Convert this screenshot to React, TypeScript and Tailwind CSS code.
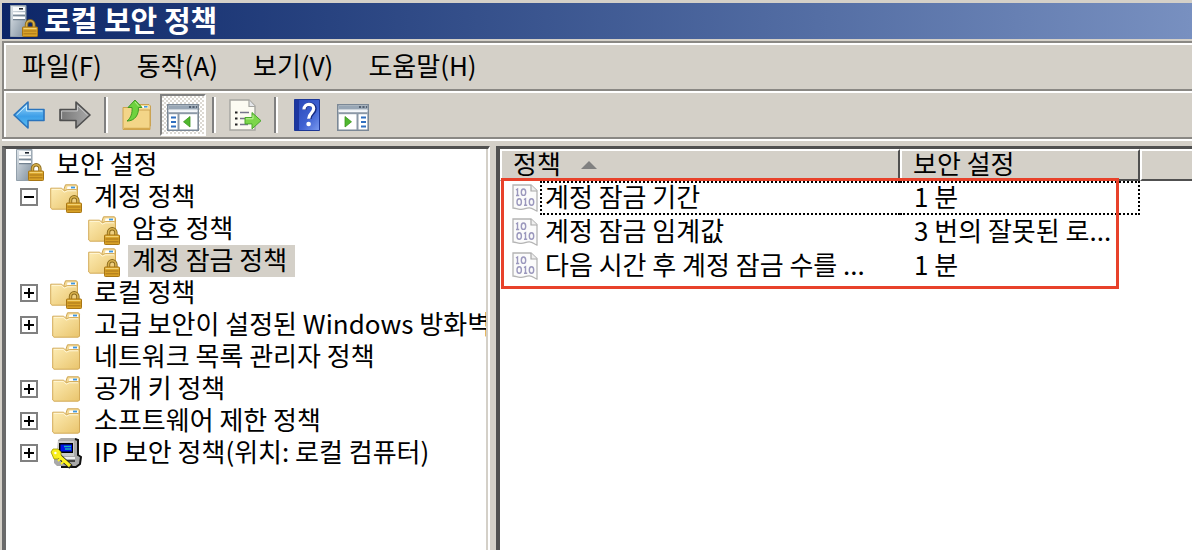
import type { ReactNode } from "react";

function Lock() {
  return (
    <g>
      <path d="M20.5 23v-3.5a3.7 3.7 0 0 1 7.4 0V23" fill="none" stroke="#8a6a1c" strokeWidth="3.4" />
      <path d="M20.5 23v-3.5a3.7 3.7 0 0 1 7.4 0V23" fill="none" stroke="#d8b04c" strokeWidth="1.6" />
      <rect x="16.5" y="22" width="15" height="9.5" rx="0.8" fill="#d9a227" stroke="#a87614" />
      <path d="M17.5 23.5h13" stroke="#f3d272" strokeWidth="1.2" />
      <path d="M17.5 26h13M17.5 28.8h13" stroke="#a9761a" />
    </g>
  );
}

function Folder({ locked = false }: { locked?: boolean }) {
  return (
    <svg viewBox="0 0 32 32" className="size-8 shrink-0" aria-hidden="true">
      <defs>
        <linearGradient id="folder" x1="0" y1="0" x2="1" y2="1">
          <stop offset="0" stopColor="#fdecb4" />
          <stop offset="1" stopColor="#e9c46c" />
        </linearGradient>
      </defs>
      <g transform={locked ? "translate(0 0)" : "translate(2 0)"}>
        <path d="M14 8l1.5-4.2h11l1 1.4V27H14z" fill="#f4dc9a" stroke="#cfa552" />
        <path d="M17.5 5.5h8.5v2.6h-9z" fill="#fff" />
        <path d="M21 5.6h4v1.8h-4z" fill="#3f97e0" />
        <path d="M.7 7.2h11l2.6 2.6 3-1.2h9.2l1 1.2v17.4L26 28.2H2L.7 27z" fill="url(#folder)" stroke="#d3aa58" />
        <path d="M1.8 8.4h9.4l3 2.8 3.4-1.4h8.6" fill="none" stroke="#fff6d6" />
      </g>
      {locked && <Lock />}
    </svg>
  );
}

function Server({ className }: { className: string }) {
  return (
    <svg viewBox="4 0 28 32" className={className} aria-hidden="true">
      <defs>
        <linearGradient id="server" x1="0" y1="0" x2="1" y2="1">
          <stop offset="0" stopColor="#dfe5ea" />
          <stop offset="1" stopColor="#7f8f9e" />
        </linearGradient>
      </defs>
      <path d="M4.5.5H20v31H4.5z" fill="url(#server)" stroke="#93a0ab" />
      <path d="M7 2h12v4H7z" fill="#f7f9fa" />
      <path d="M13 3h4v1.6h-4z" fill="#1c2430" />
      <path d="M7 8.5h12M7 13h12" stroke="#fff" strokeWidth="2.4" />
      <path d="M7 10.2h12M7 14.7h12" stroke="#5f7080" />
      <Lock />
    </svg>
  );
}

function IpKey() {
  return (
    <svg viewBox="-1 0 32 32" className="size-8 shrink-0" aria-hidden="true">
      <path d="M7 3l3-2h15l2 2v16l3 2v5l-3 3H6l-3-3v-6l3-2z" fill="#a9a9a9" />
      <path d="M24 2l3 1v15l3 2-1 7-4 3H10" fill="none" stroke="#111" strokeWidth="2" />
      <path d="M7 4h16v15H6z" fill="#c9c9c9" />
      <path d="M8 6h14v10H8z" fill="#000" />
      <path d="M9.5 7.5H21v7H9.5z" fill="#0012e8" />
      <path d="M13 9.5h7M14 12h6" stroke="#18b4b4" strokeWidth="1.4" />
      <path d="M5 20h19v2H5z" fill="#eee" />
      <path d="M10 24h14" stroke="#444" strokeWidth="2" />
      <path d="M7 18l13 12" stroke="#222" strokeWidth="5" />
      <path d="M0 15l2-3h5l3 3v4l-3 3H3z" fill="#f7ee1c" stroke="#9b9400" strokeWidth="0.8" />
      <path d="M7 18l12 11" stroke="#fdf320" strokeWidth="3.2" />
      <path d="M10 21l-3 3M13 24l-3 3" stroke="#fdf320" strokeWidth="1.8" />
      <circle cx="4.4" cy="16" r="1.2" fill="#fff" />
    </svg>
  );
}

function Arrow({ back = false }: { back?: boolean }) {
  return (
    <svg viewBox="0 0 32 28" className="h-7 w-8" aria-hidden="true">
      <defs>
        <linearGradient id="blue" x1="0" y1="0" x2="0" y2="1">
          <stop offset="0" stopColor="#a5dbfb" />
          <stop offset="0.55" stopColor="#3d9fe8" />
          <stop offset="1" stopColor="#5cc0f5" />
        </linearGradient>
        <linearGradient id="gray" x1="0" y1="0" x2="1" y2="0">
          <stop offset="0" stopColor="#757575" />
          <stop offset="1" stopColor="#a9a9a9" />
        </linearGradient>
      </defs>
      {back ? (
        <g>
          <path d="M1 14L15 1v7.5h16v11H15V27z" fill="url(#blue)" stroke="#2a74bd" strokeWidth="1.6" strokeLinejoin="round" />
          <path d="M3.6 14L13.5 4.6V10h16" fill="none" stroke="#c9ecff" />
        </g>
      ) : (
        <g>
          <path d="M31 14L17 1v7.5H1v11h16V27z" fill="url(#gray)" stroke="#4f4f4f" strokeWidth="1.6" strokeLinejoin="round" />
          <path d="M2.6 18V10h15.9V4.6L28.4 14" fill="none" stroke="#c6c6c6" />
        </g>
      )}
    </svg>
  );
}

function FolderUp() {
  return (
    <svg viewBox="0 2 30 32" className="h-8 w-[30px]" aria-hidden="true">
      <path d="M14 8l2-2.5h11l1.5 1.5v20H14z" fill="#f3dc9c" stroke="#c9a254" transform="translate(0 2)" />
      <path d="M19 9h7v2h-7z" fill="#fff" />
      <path d="M22 9h3.5v1.6H22z" fill="#3f97e0" />
      <path d="M1 10.5h10l3 2.5h14v19.5H1z" fill="#f3d588" stroke="#cda350" />
      <path d="M2 31.5h26" stroke="#d5a94e" strokeWidth="1.5" />
      <path d="M13 3l7 7.500h-3.600c.6 7-3.400 13.500-11.400 13.500 4-3 5.500-8 5-13.500H6z" fill="#6ed23e" stroke="#3f9a22" strokeLinejoin="round" />
      <path d="M13 5l4 4.600" stroke="#b8f090" />
    </svg>
  );
}

function PaneIcon({ right = false }: { right?: boolean }) {
  return (
    <svg viewBox="0 -5 32 32" className="size-8" aria-hidden="true">
      <path d="M.8.8h30.4v25.4H.8z" fill="#fff" stroke="#7b8896" strokeWidth="1.6" />
      <path d="M1.500 1.500h29v4h-29z" fill="#98a6b5" />
      <path d="M22 3h2M25.500 3h2M29 3h1.200" stroke="#3c4a5a" strokeWidth="1.6" />
      <path d="M1.500 6.800h29" stroke="#eef2f6" strokeWidth="1.6" />
      <path d="M1.500 9.200h29" stroke="#8b98a7" strokeWidth="2" />
      {right ? (
        <g>
          <path d="M20.500 10v16" stroke="#8b98a7" strokeWidth="2" />
          <path d="M24 13.500h5M24 18h5M24 22.500h5" stroke="#2f6fc0" strokeWidth="1.8" />
          <path d="M8 12.500v10.500l6.500-5.200z" fill="#4fb82e" stroke="#3c9420" strokeWidth="0.8" />
        </g>
      ) : (
        <g>
          <path d="M11.500 10v16" stroke="#8b98a7" strokeWidth="2" />
          <path d="M4 13.500h5M4 18h5M4 22.500h5" stroke="#2f6fc0" strokeWidth="1.8" />
          <path d="M23 12.500v10.500l-6.500-5.200z" fill="#4fb82e" stroke="#3c9420" strokeWidth="0.8" />
        </g>
      )}
    </svg>
  );
}

function ExportList() {
  return (
    <svg viewBox="0 0 33 32" className="h-8 w-[33px]" aria-hidden="true">
      <path d="M1 1h19l6 6v24H1z" fill="#fcfbf2" stroke="#a5a5a0" strokeWidth="1.4" />
      <path d="M20 1v6.500h6" fill="#e4e6ea" stroke="#a5a5a0" strokeWidth="1.2" />
      <path d="M6 13.500h2.500M6 19.500h2.500M6 25.500h2.500" stroke="#222" strokeWidth="2.2" />
      <path d="M11 13.500h9M11 19.500h7M11 25.500h8" stroke="#77758c" strokeWidth="1.6" />
      <path d="M16 18.500h7v-5l9 8.200-9 8.200v-5h-7z" fill="#7cd64a" stroke="#4aa82c" strokeLinejoin="round" />
      <path d="M17 19.800h7v-3.500" fill="none" stroke="#c0f29c" />
    </svg>
  );
}

function HelpBook() {
  return (
    <svg viewBox="0 0 26 32" className="h-8 w-[26px]" aria-hidden="true">
      <defs>
        <linearGradient id="help" x1="0" y1="0" x2="1" y2="1">
          <stop offset="0" stopColor="#2745b4" />
          <stop offset="0.6" stopColor="#3f62d2" />
          <stop offset="1" stopColor="#7b9bf0" />
        </linearGradient>
      </defs>
      <path d="M.5.5h25v31H.5z" fill="url(#help)" stroke="#1d3796" />
      <path d="M1 1h4v30H1z" fill="#1c36a0" />
      <path d="M10.500 11c0-7.500 10.500-7 10.500-1.200 0 4.400-5.200 4.800-5.200 10.200" fill="none" stroke="#152a80" strokeWidth="3.6" />
      <path d="M10 10.500c0-7 9.700-6.500 9.700-1 0 4.400-5 4.800-5 10.200" fill="none" stroke="#fff" strokeWidth="3.200" />
      <circle cx="14.600" cy="25" r="2.300" fill="#fff" />
    </svg>
  );
}

function PolicyIcon() {
  return (
    <svg viewBox="0 0 27 28" className="h-7 w-[27px] shrink-0" aria-hidden="true">
      <path d="M1 1h18l6 5.500V27c-3-.5-4-3.500-8-3.200-4 .4-5 2-9 1.500-3-.3-5-1.500-7-1.300z" fill="#fbfbfb" stroke="#b4b4b4" strokeWidth="1.300" />
      <path d="M19 1v6h6" fill="#eee" stroke="#a8a8a8" strokeWidth="1.200" />
      <g fill="none" stroke="#9b98bd" strokeWidth="1.400">
        <path d="M4 6l1.500-1v6.500M4 11.500h3.200" />
        <ellipse cx="11.500" cy="8.200" rx="2.200" ry="3.200" />
        <ellipse cx="7.200" cy="18" rx="2.200" ry="3.200" />
        <path d="M12 15.700l1.500-1v6.600M12 21.300h3.200" />
        <ellipse cx="19.500" cy="18" rx="2.200" ry="3.200" />
      </g>
    </svg>
  );
}

function ToolButton({ label, pressed = false, children }: { label: string; pressed?: boolean; children: ReactNode }) {
  return (
    <button
      type="button"
      aria-label={label}
      className={
        pressed
          ? "flex h-[42px] w-[46px] items-center justify-center border-2 border-t-[#808080] border-r-white border-b-white border-l-[#808080] bg-[repeating-conic-gradient(#ffffff_0_25%,#dcd9d3_0_50%)] bg-size-[4px_4px]"
          : "flex h-[42px] w-[46px] items-center justify-center"
      }
    >
      {children}
    </button>
  );
}

function Separator() {
  return (
    <div className="flex w-4 justify-center">
      <div className="h-9 w-1 border-r-2 border-l-2 border-r-white border-l-[#808080]" />
    </div>
  );
}

type Node = {
  label: string;
  icon: ReactNode;
  open?: boolean;
  closed?: boolean;
  selected?: boolean;
  children?: Node[];
};

const tree: Node[] = [
  {
    label: "계정 정책",
    icon: <Folder locked />,
    open: true,
    children: [
      { label: "암호 정책", icon: <Folder locked /> },
      { label: "계정 잠금 정책", icon: <Folder locked />, selected: true },
    ],
  },
  { label: "로컬 정책", icon: <Folder locked />, closed: true },
  { label: "고급 보안이 설정된 Windows 방화벽", icon: <Folder />, closed: true },
  { label: "네트워크 목록 관리자 정책", icon: <Folder /> },
  { label: "공개 키 정책", icon: <Folder />, closed: true },
  { label: "소프트웨어 제한 정책", icon: <Folder />, closed: true },
  { label: "IP 보안 정책(위치: 로컬 컴퓨터)", icon: <IpKey />, closed: true },
];

const policies = [
  { name: "계정 잠금 기간", value: "1 분" },
  { name: "계정 잠금 임계값", value: "3 번의 잘못된 로..." },
  { name: "다음 시간 후 계정 잠금 수를 ...", value: "1 분" },
];

function TreeItem({ node }: { node: Node }) {
  return (
    <li>
      <div className="flex h-8 items-center">
        <div className="flex w-[38px] shrink-0 pl-2">
          {(node.open || node.closed) && (
            <button
              type="button"
              aria-label={node.label}
              aria-expanded={!!node.open}
              className="flex size-[18px] items-center justify-center border-2 border-[#808080] bg-white"
            >
              <svg viewBox="0 0 10 10" className="size-[10px]" aria-hidden="true">
                <path d={node.open ? "M0 5h10" : "M0 5h10M5 0v10"} stroke="#000" strokeWidth="2" />
              </svg>
            </button>
          )}
        </div>
        {node.icon}
        <span className={node.selected ? "ml-2 bg-[#d4d0c8] pr-2 pb-1 pl-1 leading-7" : "ml-2 pb-1 pl-1 leading-7"}>
          {node.label}
        </span>
      </div>
      {node.children && (
        <ul className="pl-[38px]">
          {node.children.map((child) => (
            <TreeItem key={child.label} node={child} />
          ))}
        </ul>
      )}
    </li>
  );
}

const headCell = "h-8 border-y-2 border-l-2 border-t-white border-r-[#505050] border-b-[#505050] border-l-white bg-[#d4d0c8] p-0 pl-[11px] text-left font-normal";

export default function App() {
  return (
    <div className="flex min-h-screen flex-col bg-[#d4d0c8] pt-[3px] pl-0.5 font-['Noto_Sans_CJK_KR',sans-serif] text-[26px] leading-8 whitespace-nowrap text-black">
      {/* title bar */}
      <header className="flex h-9 items-center gap-1.5 bg-linear-to-r from-[#0d2668] to-[#7890c0] pl-2">
        <Server className="h-8 w-7" />
        <h1 className="pb-1 text-[29px] font-bold text-white">로컬 보안 정책</h1>
      </header>

      {/* menu and toolbar */}
      <div className="mt-0.5 border-y-2 border-l-2 border-[#8a8884]">
        <nav className="flex h-[46px] items-center gap-[3px] border-t-2 border-l-2 border-white pb-1">
          <button type="button" className="px-4">파일(F)</button>
          <button type="button" className="px-4">동작(A)</button>
          <button type="button" className="px-4">보기(V)</button>
          <button type="button" className="px-4">도움말(H)</button>
        </nav>
        <div className="border-t-2 border-[#8a8884]">
          <div className="flex h-[46px] items-center border-t-2 border-l-2 border-white">
            <ToolButton label="뒤로"><Arrow back /></ToolButton>
            <ToolButton label="앞으로"><Arrow /></ToolButton>
            <Separator />
            <ToolButton label="한 수준 위로"><FolderUp /></ToolButton>
            <ToolButton label="콘솔 트리 표시" pressed><PaneIcon /></ToolButton>
            <Separator />
            <ToolButton label="목록 내보내기"><ExportList /></ToolButton>
            <Separator />
            <ToolButton label="도움말"><HelpBook /></ToolButton>
            <ToolButton label="작업 창 표시"><PaneIcon right /></ToolButton>
          </div>
        </div>
      </div>
      <div className="h-0.5 bg-white" />

      <main className="mt-[5px] flex grow">
        {/* console tree */}
        <div className="flex w-[488px] shrink-0 border-t-[3px] border-r-2 border-l-4 border-t-[#505050] border-r-white border-l-[#6a6a6a] bg-white">
          <div className="min-w-0 grow overflow-hidden border-r-2 border-[#d4d0c8]">
            <div className="flex h-8 items-center gap-3 pl-2.5">
              <Server className="h-8 w-7 shrink-0" />
              <span className="pb-1 leading-7">보안 설정</span>
            </div>
            <ul className="pl-1.5">
              {tree.map((node) => (
                <TreeItem key={node.label} node={node} />
              ))}
            </ul>
          </div>
        </div>

        {/* policy list */}
        <div className="ml-1.5 grow border-t-[3px] border-l-4 border-[#505050] bg-white">
          <div className="relative">
            <table className="w-full table-fixed border-separate border-spacing-0">
              <colgroup>
                <col className="w-[400px]" />
                <col className="w-[240px]" />
                <col />
              </colgroup>
              <thead>
                <tr>
                  <th className={`${headCell} border-r-2`}>
                    <span className="flex h-7 items-center gap-5 pb-1">
                      정책
                      <svg viewBox="0 0 16 8" className="mt-1 h-2 w-4" aria-hidden="true">
                        <path d="M8 0l8 8H0z" fill="#808080" />
                      </svg>
                    </span>
                  </th>
                  <th className={`${headCell} border-r-2`}>
                    <span className="flex h-7 items-center pb-1">보안 설정</span>
                  </th>
                  <th className={headCell} aria-label="빈 열" />
                </tr>
              </thead>
              <tbody>
                {policies.map((p, i) => (
                  <tr key={p.name} className="h-[34px]">
                    <td className="p-0 pl-3">
                      <div className="flex h-[34px] items-center gap-px">
                        <PolicyIcon />
                        <span
                          className={
                            i === 0
                              ? "flex h-[34px] grow items-center border-y-2 border-l-2 border-dotted border-black pb-1 pl-[3px]"
                              : "pb-1 pl-[5px]"
                          }
                        >
                          {p.name}
                        </span>
                      </div>
                    </td>
                    <td className="p-0">
                      <div
                        className={
                          i === 0
                            ? "flex h-[34px] items-center border-y-2 border-r-2 border-dotted border-black pb-1 pl-3.5"
                            : "flex h-[34px] items-center pb-1 pl-3.5"
                        }
                      >
                        {p.value}
                      </div>
                    </td>
                    <td className="p-0" />
                  </tr>
                ))}
              </tbody>
            </table>
            {/* highlight frame over the list */}
            <div className="pointer-events-none absolute top-[29px] left-px h-[111px] w-[618px] border-3 border-[#e8412a]" />
          </div>
        </div>
      </main>
    </div>
  );
}
